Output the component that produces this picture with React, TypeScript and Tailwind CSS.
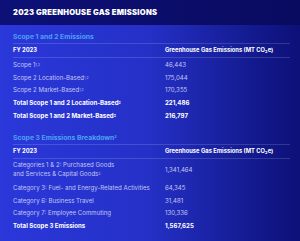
import React from "react";

const rows12 = [
  { label: "Scope 1", sup: "1,2", value: "46,443", bold: false },
  { label: "Scope 2 Location-Based", sup: "1,2", value: "175,044", bold: false },
  { label: "Scope 2 Market-Based", sup: "1,2", value: "170,355", bold: false },
  { label: "Total Scope 1 and 2 Location-Based", sup: "2", value: "221,486", bold: true },
  { label: "Total Scope 1 and 2 Market-Based", sup: "2", value: "216,797", bold: true },
];

const rows3 = [
  { label: "Categories 1 & 2: Purchased Goods and Services & Capital Goods", sup: "3", value: "1,341,464", bold: false, two: true },
  { label: "Category 3: Fuel- and Energy-Related Activities", sup: "", value: "64,345", bold: false },
  { label: "Category 6: Business Travel", sup: "", value: "31,481", bold: false },
  { label: "Category 7: Employee Commuting", sup: "", value: "130,336", bold: false },
  { label: "Total Scope 3 Emissions", sup: "", value: "1,567,625", bold: true },
];

function Head() {
  return (
    <div className="grid grid-cols-[152px_1fr] items-center border-b border-white/15 h-[14px] text-[5.8px] font-bold text-white">
      <div>FY 2023</div>
      <div>
        Greenhouse Gas Emissions (MT CO<sub className="text-[4px] align-baseline relative top-[1px]">2</sub>e)
      </div>
    </div>
  );
}

function Row({ r }: { r: any }) {
  return (
    <div
      className={`grid grid-cols-[152px_1fr] items-center text-[6.1px] ${
        r.bold ? "font-bold text-white" : "text-[#c3c7f3]"
      } ${r.two ? "h-[22px] leading-[8.5px]" : "h-[12.8px]"}`}
    >
      <div className={r.two ? "w-[112px]" : "whitespace-nowrap overflow-hidden"}>
        {r.label}
        {r.sup && <sup className="text-[3.5px] leading-none relative -top-[1px]">{r.sup}</sup>}
      </div>
      <div>{r.value}</div>
    </div>
  );
}

export default function App() {
  return (
    <div
      className="w-[300px] h-[241px] overflow-hidden bg-gradient-to-r from-[#2b38da] via-[#2430c6] to-[#0c1077]"
      style={{ fontFamily: "Inter, 'Noto Sans', sans-serif" }}
    >
      <div className="h-[25px] bg-gradient-to-r from-[#0d1076] to-[#090b60] flex items-center px-[13px]">
        <div className="text-[7.6px] font-black text-white tracking-[0.25px]">
          2023 GREENHOUSE GAS EMISSIONS
        </div>
      </div>
      <div className="px-[13px] pr-[10px]">
        <div className="mt-[7px] text-[6.8px] font-bold text-[#4aa3f5] h-[12px] flex items-center border-b border-white/15">
          Scope 1 and 2 Emissions
        </div>
        <Head />
        <div>
          {rows12.map((r) => (
            <Row key={r.label} r={r} />
          ))}
        </div>
        <div className="mt-[11px] text-[6.8px] font-bold text-[#4aa3f5] h-[12px] flex items-center border-b border-white/15">
          Scope 3 Emissions Breakdown<sup className="text-[3.5px] relative -top-[1px]">3</sup>
        </div>
        <Head />
        <div>
          {rows3.map((r) => (
            <Row key={r.label} r={r} />
          ))}
        </div>
      </div>
    </div>
  );
}
